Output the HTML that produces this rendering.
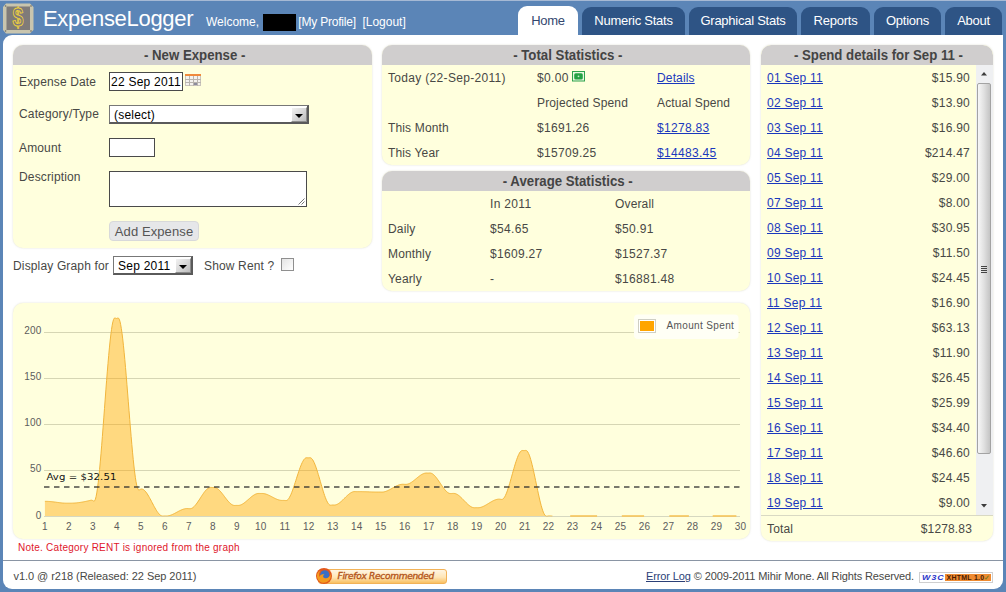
<!DOCTYPE html>
<html lang="en">
<head>
<meta charset="utf-8">
<title>ExpenseLogger</title>
<style>
*{box-sizing:border-box;margin:0;padding:0}
html,body{width:1006px;height:592px;overflow:hidden}
body{background:#5b85b7;font-family:"Liberation Sans",Arial,sans-serif;font-size:12px;color:#484845;position:relative}
a{color:#1a38bd;text-decoration:underline}
#logo{position:absolute;left:3px;top:2.5px;width:31px;height:31px}
#title{position:absolute;left:43px;top:5.7px;font-size:22px;color:#fff;line-height:26px;white-space:nowrap;letter-spacing:-0.3px}
.wl{position:absolute;left:206px;top:14.6px;color:#fff;font-size:12px;line-height:15px;white-space:nowrap}
#redact{position:absolute;left:263px;top:14px;width:33px;height:17px;background:#000}
.tab{position:absolute;top:7px;height:27.5px;background:#2e5485;color:#fff;font-size:13px;line-height:27px;text-align:center;border-radius:9px 9px 0 0;white-space:nowrap;letter-spacing:-0.25px}
.tab.on{background:#fff;color:#33476e;top:6px;height:31px;line-height:29px}
#main{position:absolute;left:3px;top:34.5px;width:1000px;height:554.2px;background:#fff;border-radius:9px 0 9px 9px}
.panel{position:absolute;background:#ffffdd;border-radius:10px;box-shadow:0 0 2px rgba(170,170,140,.4)}
.panel h2{height:20px;background:#d0cece;border-radius:10px 10px 0 0;font-size:14px;line-height:21.5px;text-align:center;color:#444;font-weight:bold;white-space:nowrap;padding-left:4px}
.panel h2 span{display:inline-block;transform:scaleX(.945);transform-origin:50% 50%}
.t{position:absolute;white-space:nowrap;line-height:14px;letter-spacing:.15px}
.r{text-align:right}
.dl{letter-spacing:.24px}
.ds{letter-spacing:.32px}
.box{position:absolute;background:#fff;border:1px solid #4a4a4a}
.sel{border-color:#777 #5a5a5a #5a5a5a #777;border-width:1px 2px 2px 1px}
.arrow{position:absolute;right:0;top:1px;bottom:0;width:16px;background:linear-gradient(135deg,#f2f2f2,#d9d9d9 50%,#bdbdbd);border:1px solid;border-color:#fff #8c8c8c #8c8c8c #fff}
.arrow:after{content:"";position:absolute;left:3px;top:5.5px;border:4px solid transparent;border-top:4px solid #000;border-bottom:0}
#footer{position:absolute;left:3px;top:560px;width:1000px;height:1px;background:#8a95a4}
.ft{font-size:11px;letter-spacing:-.05px}
</style>
</head>
<body>
<svg id="logo" viewBox="0 0 31 31"><path d="M3 0.5H27L30.500 4V27L27 30.500H3L0 27V4Z" fill="#c9c5ae"/><rect x="3.500" y="3.500" width="23.500" height="23.500" fill="#7f7b79"/><circle cx="2.600" cy="3" r="0.800" fill="#6b6860"/><circle cx="28" cy="3" r="0.800" fill="#6b6860"/><circle cx="2.600" cy="28" r="0.800" fill="#6b6860"/><circle cx="28" cy="28" r="0.800" fill="#6b6860"/><text x="15" y="23.3" font-family="Liberation Sans, sans-serif" font-weight="bold" font-size="25" fill="none" stroke="#f4d43a" stroke-width="0.9" text-anchor="middle" transform="translate(15 0) scale(0.78 1) translate(-15 0)">$</text></svg>
<div id="title">ExpenseLogger</div>
<div class="wl">Welcome,</div><div class="wl" style="left:298.3px;letter-spacing:-.2px">[My Profile]</div><div class="wl" style="left:362.4px">[Logout]</div>
<div id="redact"></div>

<div class="tab on" style="left:518px;width:60px">Home</div>
<div class="tab" style="left:582px;width:103px">Numeric Stats</div>
<div class="tab" style="left:689px;width:108px">Graphical Stats</div>
<div class="tab" style="left:801px;width:69px">Reports</div>
<div class="tab" style="left:874px;width:67px">Options</div>
<div class="tab" style="left:945px;width:57px">About</div>

<div id="main"></div>
<div style="position:absolute;left:0;top:0;width:1006px;height:1px;background:#a6b9d4"></div>

<!-- New Expense -->
<div class="panel" style="left:13px;top:45px;width:359px;height:203px"><h2><span>- New Expense -</span></h2></div>
<div class="t" style="left:19px;top:75px">Expense Date</div>
<div class="t" style="left:19px;top:107px">Category/Type</div>
<div class="t" style="left:19px;top:140.7px">Amount</div>
<div class="t" style="left:19px;top:170px">Description</div>
<div class="box" style="left:109px;top:72px;width:74px;height:19px"><span class="t dl" style="left:1px;top:2px;font-size:12px;color:#000">22 Sep 2011</span></div>
<svg style="position:absolute;left:185px;top:74px" width="16" height="12" viewBox="0 0 16 12"><rect x="0.5" y="0.5" width="15" height="11" fill="#f4f2ee" stroke="#c9c4bc"/><rect x="0" y="0" width="16" height="2" fill="#f08a3c"/><path d="M4.5 2V12M8.5 2V12M12.5 2V12M0 5.5H16M0 8.5H16" stroke="#b9b4ae" stroke-width="1" fill="none"/><rect x="9" y="9" width="3" height="2" fill="#8c8c9c"/></svg>
<div class="box sel" style="left:109px;top:105px;width:200px;height:19px"><span class="t" style="left:4px;top:2px;font-size:12px;color:#000;letter-spacing:.2px">(select)</span><span class="arrow"></span></div>
<div class="box" style="left:109px;top:138px;width:46px;height:19px"></div>
<div class="box" style="left:109px;top:171px;width:198px;height:36px"><svg style="position:absolute;right:1px;bottom:1px" width="8" height="8" viewBox="0 0 8 8"><path d="M7.5 1.5L1.5 7.5M7.5 4.5L4.5 7.5" stroke="#777" stroke-width="1"/></svg></div>
<div class="t" style="left:109px;top:221px;width:90px;height:20px;background:#e6e7e9;border:1px solid #d8d9da;border-radius:4px;font-size:13px;line-height:18px;padding-top:.7px;text-align:center;color:#555;letter-spacing:.1px">Add Expense</div>

<div class="t" style="left:13px;top:259px">Display Graph for</div>
<div class="box sel" style="left:113px;top:256px;width:80px;height:19px"><span class="t dl" style="left:4px;top:2px;font-size:12px;color:#000">Sep 2011</span><span class="arrow"></span></div>
<div class="t" style="left:204px;top:259px">Show Rent ?</div>
<div class="box" style="left:281px;top:258px;width:13px;height:13px;border-color:#8f8f8f;background:linear-gradient(135deg,#e4e4e4,#fff)"></div>

<!-- Total Statistics -->
<div class="panel" style="left:382px;top:45px;width:368px;height:120px"><h2><span>- Total Statistics -</span></h2></div>
<div class="t ds" style="left:388px;top:70.5px">Today (22-Sep-2011)</div>
<div class="t ds" style="left:537px;top:70.5px">$0.00</div>
<a class="t" href="#" style="left:657px;top:70.5px">Details</a>
<div class="t" style="left:537px;top:95.5px">Projected Spend</div>
<div class="t" style="left:657px;top:95.5px">Actual Spend</div>
<div class="t" style="left:388px;top:120.5px">This Month</div>
<div class="t ds" style="left:537px;top:120.5px">$1691.26</div>
<a class="t ds" href="#" style="left:657px;top:120.5px">$1278.83</a>
<div class="t" style="left:388px;top:145.5px">This Year</div>
<div class="t ds" style="left:537px;top:145.5px">$15709.25</div>
<a class="t ds" href="#" style="left:657px;top:145.5px">$14483.45</a>
<svg style="position:absolute;left:572px;top:71px" width="13" height="11" viewBox="0 0 13 11"><rect x="0.5" y="0.5" width="12" height="9.5" fill="#e9f7df" stroke="#2ea34c"/><rect x="2.2" y="2.2" width="8.6" height="6.2" rx="1.5" fill="#25a244"/><circle cx="6.5" cy="5.3" r="0.9" fill="#c9efc9"/></svg>
<!-- Average Statistics -->
<div class="panel" style="left:382px;top:171px;width:368px;height:120px"><h2><span>- Average Statistics -</span></h2></div>
<div class="t ds" style="left:490px;top:196.5px">In 2011</div>
<div class="t" style="left:615px;top:196.5px">Overall</div>
<div class="t" style="left:388px;top:221.5px">Daily</div>
<div class="t ds" style="left:490px;top:221.5px">$54.65</div>
<div class="t ds" style="left:615px;top:221.5px">$50.91</div>
<div class="t" style="left:388px;top:246.5px">Monthly</div>
<div class="t ds" style="left:490px;top:246.5px">$1609.27</div>
<div class="t ds" style="left:615px;top:246.5px">$1527.37</div>
<div class="t" style="left:388px;top:271.5px">Yearly</div>
<div class="t" style="left:490px;top:271.5px">-</div>
<div class="t ds" style="left:615px;top:271.5px">$16881.48</div>
<!-- Spend details -->
<div class="panel" style="left:761px;top:45px;width:231.5px;height:496px;overflow:hidden"><h2><span>- Spend details for Sep 11 -</span></h2>
<div style="position:absolute;left:215px;top:20px;width:17px;height:450px;background:#eff0f2"></div>
<div style="position:absolute;left:216px;top:38px;width:14px;height:371px;border:1px solid #a3a3a3;border-radius:2px;background:linear-gradient(90deg,#f7f7f7,#e0e0e0 50%,#c4c4c4)"></div>
<div style="position:absolute;left:0;top:470px;width:232px;height:1px;background:#d9d9c3"></div>
</div>
<svg style="position:absolute;left:976px;top:65px" width="17" height="451" viewBox="0 0 17 451"><path d="M5 10.6L8 6.9L11 10.6Z" fill="#3c3c3c"/><path d="M5 439L8 442.5L11 439Z" fill="#3c3c3c"/><path d="M5 201.5H11M5 203.5H11M5 205.5H11M5 207.5H11" stroke="#444" stroke-width="1"/></svg>
<a class="t dl" href="#" style="left:767px;top:70.5px">01 Sep 11</a><div class="t r dl" style="left:880px;width:90px;top:70.5px">$15.90</div>
<a class="t dl" href="#" style="left:767px;top:95.5px">02 Sep 11</a><div class="t r dl" style="left:880px;width:90px;top:95.5px">$13.90</div>
<a class="t dl" href="#" style="left:767px;top:120.5px">03 Sep 11</a><div class="t r dl" style="left:880px;width:90px;top:120.5px">$16.90</div>
<a class="t dl" href="#" style="left:767px;top:145.5px">04 Sep 11</a><div class="t r dl" style="left:880px;width:90px;top:145.5px">$214.47</div>
<a class="t dl" href="#" style="left:767px;top:170.5px">05 Sep 11</a><div class="t r dl" style="left:880px;width:90px;top:170.5px">$29.00</div>
<a class="t dl" href="#" style="left:767px;top:195.5px">07 Sep 11</a><div class="t r dl" style="left:880px;width:90px;top:195.5px">$8.00</div>
<a class="t dl" href="#" style="left:767px;top:220.5px">08 Sep 11</a><div class="t r dl" style="left:880px;width:90px;top:220.5px">$30.95</div>
<a class="t dl" href="#" style="left:767px;top:245.5px">09 Sep 11</a><div class="t r dl" style="left:880px;width:90px;top:245.5px">$11.50</div>
<a class="t dl" href="#" style="left:767px;top:270.5px">10 Sep 11</a><div class="t r dl" style="left:880px;width:90px;top:270.5px">$24.45</div>
<a class="t dl" href="#" style="left:767px;top:295.5px">11 Sep 11</a><div class="t r dl" style="left:880px;width:90px;top:295.5px">$16.90</div>
<a class="t dl" href="#" style="left:767px;top:320.5px">12 Sep 11</a><div class="t r dl" style="left:880px;width:90px;top:320.5px">$63.13</div>
<a class="t dl" href="#" style="left:767px;top:345.5px">13 Sep 11</a><div class="t r dl" style="left:880px;width:90px;top:345.5px">$11.90</div>
<a class="t dl" href="#" style="left:767px;top:370.5px">14 Sep 11</a><div class="t r dl" style="left:880px;width:90px;top:370.5px">$26.45</div>
<a class="t dl" href="#" style="left:767px;top:395.5px">15 Sep 11</a><div class="t r dl" style="left:880px;width:90px;top:395.5px">$25.99</div>
<a class="t dl" href="#" style="left:767px;top:420.5px">16 Sep 11</a><div class="t r dl" style="left:880px;width:90px;top:420.5px">$34.40</div>
<a class="t dl" href="#" style="left:767px;top:445.5px">17 Sep 11</a><div class="t r dl" style="left:880px;width:90px;top:445.5px">$46.60</div>
<a class="t dl" href="#" style="left:767px;top:470.5px">18 Sep 11</a><div class="t r dl" style="left:880px;width:90px;top:470.5px">$24.45</div>
<a class="t dl" href="#" style="left:767px;top:495.5px">19 Sep 11</a><div class="t r dl" style="left:880px;width:90px;top:495.5px">$9.00</div>
<div class="t" style="left:767px;top:521.5px">Total</div>
<div class="t r" style="left:880px;width:92px;top:521.5px">$1278.83</div>
<!-- Graph -->
<div class="panel" style="left:13px;top:302.8px;width:737px;height:236.4px"></div>
<svg id="chart" width="737" height="238" viewBox="13 302 737 238" style="position:absolute;left:13px;top:302px">
<path d="M44 332.5H740" stroke="#d6d6b4" stroke-width="1" fill="none"/>
<path d="M44 378.5H740" stroke="#d6d6b4" stroke-width="1" fill="none"/>
<path d="M44 424.5H740" stroke="#d6d6b4" stroke-width="1" fill="none"/>
<path d="M44 470.5H740" stroke="#d6d6b4" stroke-width="1" fill="none"/>
<path d="M44 516.5H740" stroke="#d6d8c0" stroke-width="1" fill="none"/>
<clipPath id="pc"><rect x="44" y="310" width="697" height="206.6"/></clipPath>
<g clip-path="url(#pc)"><path d="M44.91 501.35 L45.61 501.35 L46.31 501.35 L47.01 501.36 L47.71 501.38 L48.41 501.41 L49.11 501.45 L49.81 501.50 L50.51 501.56 L51.21 501.63 L51.92 501.70 L52.62 501.78 L53.32 501.86 L54.02 501.95 L54.72 502.04 L55.42 502.14 L56.12 502.23 L56.82 502.33 L57.52 502.42 L58.22 502.51 L58.93 502.61 L59.63 502.69 L60.33 502.78 L61.03 502.86 L61.73 502.93 L62.43 503.00 L63.13 503.05 L63.83 503.10 L64.53 503.15 L65.23 503.18 L65.94 503.20 L66.64 503.20 L67.34 503.20 L68.04 503.20 L68.74 503.20 L69.44 503.20 L70.14 503.20 L70.84 503.20 L71.54 503.19 L72.24 503.17 L72.95 503.14 L73.65 503.10 L74.35 503.06 L75.05 503.01 L75.75 502.95 L76.45 502.88 L77.15 502.81 L77.85 502.73 L78.55 502.64 L79.25 502.55 L79.96 502.45 L80.66 502.34 L81.36 502.23 L82.06 502.11 L82.76 501.99 L83.46 501.86 L84.16 501.73 L84.86 501.59 L85.56 501.45 L86.26 501.30 L86.97 501.15 L87.67 500.99 L88.37 500.83 L89.07 500.67 L89.77 500.51 L90.47 500.34 L91.17 500.22 L91.87 500.24 L92.57 500.49 L93.27 500.92 L93.98 501.14 L94.68 500.71 L95.38 499.24 L96.08 496.62 L96.78 492.95 L97.48 488.32 L98.18 482.81 L98.88 476.52 L99.58 469.53 L100.28 461.93 L100.99 453.81 L101.69 445.26 L102.39 436.36 L103.09 427.20 L103.79 417.88 L104.49 408.48 L105.19 399.10 L105.89 389.80 L106.59 380.70 L107.29 371.87 L108.00 363.41 L108.70 355.39 L109.40 347.92 L110.10 341.07 L110.80 334.95 L111.50 329.63 L112.20 325.20 L112.90 321.76 L113.60 319.39 L114.30 318.17 L115.01 317.95 L115.71 318.23 L116.41 318.47 L117.11 318.30 L117.81 318.02 L118.51 318.13 L119.21 319.13 L119.91 321.22 L120.61 324.32 L121.31 328.36 L122.02 333.24 L122.72 338.90 L123.42 345.24 L124.12 352.18 L124.82 359.64 L125.52 367.53 L126.22 375.78 L126.92 384.30 L127.62 393.00 L128.32 401.81 L129.03 410.63 L129.73 419.40 L130.43 428.02 L131.13 436.40 L131.83 444.48 L132.53 452.17 L133.23 459.37 L133.93 466.01 L134.63 472.01 L135.33 477.29 L136.04 481.75 L136.74 485.32 L137.44 487.92 L138.14 489.45 L138.84 489.97 L139.54 489.82 L140.24 489.40 L140.94 489.09 L141.64 489.00 L142.34 489.11 L143.05 489.40 L143.75 489.83 L144.45 490.41 L145.15 491.12 L145.85 491.95 L146.55 492.87 L147.25 493.90 L147.95 495.00 L148.65 496.18 L149.35 497.41 L150.06 498.68 L150.76 500.00 L151.46 501.33 L152.16 502.67 L152.86 504.02 L153.56 505.35 L154.26 506.65 L154.96 507.92 L155.66 509.14 L156.36 510.30 L157.07 511.39 L157.77 512.39 L158.47 513.30 L159.17 514.10 L159.87 514.78 L160.57 515.33 L161.27 515.74 L161.97 515.99 L162.67 516.09 L163.37 516.07 L164.08 516.02 L164.78 515.99 L165.48 515.99 L166.18 516.01 L166.88 516.00 L167.58 515.94 L168.28 515.84 L168.98 515.70 L169.68 515.51 L170.38 515.29 L171.09 515.04 L171.79 514.76 L172.49 514.45 L173.19 514.13 L173.89 513.78 L174.59 513.43 L175.29 513.06 L175.99 512.68 L176.69 512.30 L177.39 511.92 L178.10 511.54 L178.80 511.17 L179.50 510.81 L180.20 510.47 L180.90 510.14 L181.60 509.84 L182.30 509.56 L183.00 509.30 L183.70 509.08 L184.40 508.90 L185.11 508.75 L185.81 508.65 L186.51 508.60 L187.21 508.58 L187.91 508.60 L188.61 508.65 L189.31 508.70 L190.01 508.72 L190.71 508.65 L191.41 508.45 L192.12 508.12 L192.82 507.68 L193.52 507.12 L194.22 506.46 L194.92 505.72 L195.62 504.89 L196.32 504.00 L197.02 503.05 L197.72 502.05 L198.42 501.01 L199.13 499.94 L199.83 498.86 L200.53 497.77 L201.23 496.68 L201.93 495.61 L202.63 494.56 L203.33 493.54 L204.03 492.56 L204.73 491.64 L205.43 490.79 L206.14 490.01 L206.84 489.31 L207.54 488.71 L208.24 488.21 L208.94 487.83 L209.64 487.57 L210.34 487.45 L211.04 487.43 L211.74 487.47 L212.44 487.50 L213.15 487.47 L213.85 487.45 L214.55 487.47 L215.25 487.59 L215.95 487.83 L216.65 488.17 L217.35 488.61 L218.05 489.13 L218.75 489.74 L219.45 490.42 L220.16 491.16 L220.86 491.95 L221.56 492.79 L222.26 493.66 L222.96 494.57 L223.66 495.48 L224.36 496.41 L225.06 497.34 L225.76 498.26 L226.46 499.16 L227.17 500.04 L227.87 500.88 L228.57 501.68 L229.27 502.42 L229.97 503.11 L230.67 503.72 L231.37 504.26 L232.07 504.71 L232.77 505.06 L233.47 505.30 L234.18 505.44 L234.88 505.47 L235.58 505.44 L236.28 505.41 L236.98 505.41 L237.68 505.43 L238.38 505.43 L239.08 505.37 L239.78 505.23 L240.48 505.02 L241.19 504.75 L241.89 504.41 L242.59 504.02 L243.29 503.57 L243.99 503.09 L244.69 502.57 L245.39 502.02 L246.09 501.44 L246.79 500.84 L247.49 500.23 L248.20 499.62 L248.90 499.00 L249.60 498.38 L250.30 497.78 L251.00 497.19 L251.70 496.62 L252.40 496.08 L253.10 495.58 L253.80 495.11 L254.50 494.69 L255.20 494.32 L255.91 494.01 L256.61 493.76 L257.31 493.58 L258.01 493.48 L258.71 493.44 L259.41 493.45 L260.11 493.48 L260.81 493.48 L261.51 493.47 L262.21 493.47 L262.92 493.49 L263.62 493.57 L264.32 493.68 L265.02 493.84 L265.72 494.04 L266.42 494.27 L267.12 494.53 L267.82 494.82 L268.52 495.13 L269.22 495.46 L269.93 495.80 L270.63 496.16 L271.33 496.52 L272.03 496.89 L272.73 497.26 L273.43 497.62 L274.13 497.98 L274.83 498.33 L275.53 498.67 L276.23 498.98 L276.94 499.28 L277.64 499.55 L278.34 499.79 L279.04 500.00 L279.74 500.17 L280.44 500.30 L281.14 500.39 L281.84 500.43 L282.54 500.43 L283.24 500.41 L283.95 500.41 L284.65 500.47 L285.35 500.56 L286.05 500.58 L286.75 500.43 L287.45 500.00 L288.15 499.32 L288.85 498.39 L289.55 497.25 L290.25 495.90 L290.96 494.38 L291.66 492.70 L292.36 490.88 L293.06 488.94 L293.76 486.91 L294.46 484.81 L295.16 482.65 L295.86 480.46 L296.56 478.26 L297.26 476.06 L297.97 473.90 L298.67 471.78 L299.37 469.73 L300.07 467.78 L300.77 465.94 L301.47 464.23 L302.17 462.68 L302.87 461.30 L303.57 460.12 L304.27 459.15 L304.98 458.42 L305.68 457.95 L306.38 457.75 L307.08 457.76 L307.78 457.83 L308.48 457.85 L309.18 457.77 L309.88 457.72 L310.58 457.81 L311.28 458.19 L311.99 458.86 L312.69 459.80 L313.39 461.00 L314.09 462.42 L314.79 464.05 L315.49 465.86 L316.19 467.83 L316.89 469.94 L317.59 472.16 L318.29 474.46 L319.00 476.84 L319.70 479.26 L320.40 481.70 L321.10 484.13 L321.80 486.55 L322.50 488.91 L323.20 491.20 L323.90 493.40 L324.60 495.48 L325.30 497.42 L326.01 499.20 L326.71 500.79 L327.41 502.17 L328.11 503.32 L328.81 504.21 L329.51 504.83 L330.21 505.15 L330.91 505.21 L331.61 505.13 L332.31 505.04 L333.02 505.02 L333.72 505.04 L334.42 505.05 L335.12 504.99 L335.82 504.85 L336.52 504.61 L337.22 504.31 L337.92 503.93 L338.62 503.49 L339.32 503.00 L340.03 502.45 L340.73 501.87 L341.43 501.24 L342.13 500.59 L342.83 499.92 L343.53 499.23 L344.23 498.53 L344.93 497.83 L345.63 497.14 L346.33 496.46 L347.04 495.79 L347.74 495.15 L348.44 494.54 L349.14 493.97 L349.84 493.45 L350.54 492.97 L351.24 492.56 L351.94 492.21 L352.64 491.93 L353.34 491.73 L354.05 491.62 L354.75 491.59 L355.45 491.60 L356.15 491.63 L356.85 491.65 L357.55 491.65 L358.25 491.65 L358.95 491.64 L359.65 491.63 L360.35 491.63 L361.06 491.64 L361.76 491.65 L362.46 491.66 L363.16 491.67 L363.86 491.69 L364.56 491.71 L365.26 491.73 L365.96 491.75 L366.66 491.77 L367.36 491.80 L368.07 491.83 L368.77 491.85 L369.47 491.88 L370.17 491.90 L370.87 491.93 L371.57 491.95 L372.27 491.97 L372.97 491.99 L373.67 492.01 L374.37 492.03 L375.08 492.04 L375.78 492.05 L376.48 492.06 L377.18 492.06 L377.88 492.06 L378.58 492.06 L379.28 492.06 L379.98 492.06 L380.68 492.07 L381.38 492.09 L382.09 492.09 L382.79 492.05 L383.49 491.97 L384.19 491.84 L384.89 491.67 L385.59 491.46 L386.29 491.21 L386.99 490.94 L387.69 490.63 L388.39 490.30 L389.10 489.95 L389.80 489.59 L390.50 489.21 L391.20 488.82 L391.90 488.42 L392.60 488.03 L393.30 487.63 L394.00 487.24 L394.70 486.86 L395.40 486.49 L396.11 486.14 L396.81 485.80 L397.51 485.49 L398.21 485.21 L398.91 484.96 L399.61 484.74 L400.31 484.56 L401.01 484.42 L401.71 484.33 L402.41 484.28 L403.12 484.28 L403.82 484.30 L404.52 484.33 L405.22 484.36 L405.92 484.37 L406.62 484.32 L407.32 484.20 L408.02 484.02 L408.72 483.77 L409.42 483.47 L410.13 483.11 L410.83 482.71 L411.53 482.26 L412.23 481.78 L412.93 481.27 L413.63 480.73 L414.33 480.18 L415.03 479.61 L415.73 479.03 L416.43 478.45 L417.14 477.87 L417.84 477.30 L418.54 476.74 L419.24 476.20 L419.94 475.69 L420.64 475.20 L421.34 474.76 L422.04 474.35 L422.74 473.99 L423.44 473.68 L424.15 473.42 L424.85 473.23 L425.55 473.11 L426.25 473.06 L426.95 473.06 L427.65 473.08 L428.35 473.08 L429.05 473.04 L429.75 473.01 L430.45 473.06 L431.16 473.21 L431.86 473.50 L432.56 473.90 L433.26 474.41 L433.96 475.02 L434.66 475.72 L435.36 476.49 L436.06 477.33 L436.76 478.24 L437.46 479.19 L438.17 480.18 L438.87 481.20 L439.57 482.24 L440.27 483.28 L440.97 484.33 L441.67 485.37 L442.37 486.39 L443.07 487.38 L443.77 488.34 L444.47 489.24 L445.18 490.08 L445.88 490.86 L446.58 491.56 L447.28 492.17 L447.98 492.68 L448.68 493.08 L449.38 493.37 L450.08 493.53 L450.78 493.57 L451.48 493.55 L452.19 493.48 L452.89 493.43 L453.59 493.41 L454.29 493.44 L454.99 493.56 L455.69 493.76 L456.39 494.04 L457.09 494.40 L457.79 494.82 L458.49 495.31 L459.20 495.85 L459.90 496.44 L460.60 497.07 L461.30 497.73 L462.00 498.42 L462.70 499.13 L463.40 499.85 L464.10 500.58 L464.80 501.31 L465.50 502.03 L466.21 502.74 L466.91 503.43 L467.61 504.10 L468.31 504.72 L469.01 505.31 L469.71 505.85 L470.41 506.34 L471.11 506.77 L471.81 507.12 L472.51 507.41 L473.22 507.61 L473.92 507.72 L474.62 507.76 L475.32 507.74 L476.02 507.71 L476.72 507.71 L477.42 507.72 L478.12 507.73 L478.82 507.69 L479.52 507.61 L480.23 507.47 L480.93 507.29 L481.63 507.07 L482.33 506.81 L483.03 506.51 L483.73 506.19 L484.43 505.84 L485.13 505.46 L485.83 505.07 L486.53 504.66 L487.24 504.24 L487.94 503.81 L488.64 503.38 L489.34 502.95 L490.04 502.53 L490.74 502.11 L491.44 501.71 L492.14 501.32 L492.84 500.95 L493.54 500.60 L494.25 500.28 L494.95 500.00 L495.65 499.75 L496.35 499.53 L497.05 499.36 L497.75 499.24 L498.45 499.17 L499.15 499.15 L499.85 499.20 L500.55 499.30 L501.26 499.41 L501.96 499.41 L502.66 499.19 L503.36 498.67 L504.06 497.85 L504.76 496.76 L505.46 495.42 L506.16 493.86 L506.86 492.09 L507.56 490.15 L508.27 488.06 L508.97 485.83 L509.67 483.50 L510.37 481.09 L511.07 478.62 L511.77 476.12 L512.47 473.60 L513.17 471.10 L513.87 468.63 L514.57 466.22 L515.28 463.90 L515.98 461.69 L516.68 459.60 L517.38 457.67 L518.08 455.92 L518.78 454.38 L519.48 453.05 L520.18 451.98 L520.88 451.18 L521.58 450.68 L522.29 450.49 L522.99 450.51 L523.69 450.59 L524.39 450.59 L525.09 450.47 L525.79 450.41 L526.49 450.58 L527.19 451.14 L527.89 452.11 L528.59 453.45 L529.30 455.14 L530.00 457.14 L530.70 459.42 L531.40 461.95 L532.10 464.69 L532.80 467.62 L533.50 470.70 L534.20 473.90 L534.90 477.20 L535.60 480.55 L536.30 483.92 L537.01 487.29 L537.71 490.63 L538.41 493.89 L539.11 497.05 L539.81 500.09 L540.51 502.95 L541.21 505.62 L541.91 508.07 L542.61 510.25 L543.31 512.14 L544.02 513.71 L544.72 514.93 L545.42 515.76 L546.12 516.17 L546.82 516.25 L547.52 516.13 L548.22 515.99 L548.92 515.93 L549.62 515.94 L550.32 515.98 L551.03 516.04 L551.73 516.08 L552.43 516.12 L552.43 516.00 L44.91 516.00 Z" fill="#ffa500" fill-opacity="0.42" stroke="none"/>
<path d="M44.91 501.35 L45.61 501.35 L46.31 501.35 L47.01 501.36 L47.71 501.38 L48.41 501.41 L49.11 501.45 L49.81 501.50 L50.51 501.56 L51.21 501.63 L51.92 501.70 L52.62 501.78 L53.32 501.86 L54.02 501.95 L54.72 502.04 L55.42 502.14 L56.12 502.23 L56.82 502.33 L57.52 502.42 L58.22 502.51 L58.93 502.61 L59.63 502.69 L60.33 502.78 L61.03 502.86 L61.73 502.93 L62.43 503.00 L63.13 503.05 L63.83 503.10 L64.53 503.15 L65.23 503.18 L65.94 503.20 L66.64 503.20 L67.34 503.20 L68.04 503.20 L68.74 503.20 L69.44 503.20 L70.14 503.20 L70.84 503.20 L71.54 503.19 L72.24 503.17 L72.95 503.14 L73.65 503.10 L74.35 503.06 L75.05 503.01 L75.75 502.95 L76.45 502.88 L77.15 502.81 L77.85 502.73 L78.55 502.64 L79.25 502.55 L79.96 502.45 L80.66 502.34 L81.36 502.23 L82.06 502.11 L82.76 501.99 L83.46 501.86 L84.16 501.73 L84.86 501.59 L85.56 501.45 L86.26 501.30 L86.97 501.15 L87.67 500.99 L88.37 500.83 L89.07 500.67 L89.77 500.51 L90.47 500.34 L91.17 500.22 L91.87 500.24 L92.57 500.49 L93.27 500.92 L93.98 501.14 L94.68 500.71 L95.38 499.24 L96.08 496.62 L96.78 492.95 L97.48 488.32 L98.18 482.81 L98.88 476.52 L99.58 469.53 L100.28 461.93 L100.99 453.81 L101.69 445.26 L102.39 436.36 L103.09 427.20 L103.79 417.88 L104.49 408.48 L105.19 399.10 L105.89 389.80 L106.59 380.70 L107.29 371.87 L108.00 363.41 L108.70 355.39 L109.40 347.92 L110.10 341.07 L110.80 334.95 L111.50 329.63 L112.20 325.20 L112.90 321.76 L113.60 319.39 L114.30 318.17 L115.01 317.95 L115.71 318.23 L116.41 318.47 L117.11 318.30 L117.81 318.02 L118.51 318.13 L119.21 319.13 L119.91 321.22 L120.61 324.32 L121.31 328.36 L122.02 333.24 L122.72 338.90 L123.42 345.24 L124.12 352.18 L124.82 359.64 L125.52 367.53 L126.22 375.78 L126.92 384.30 L127.62 393.00 L128.32 401.81 L129.03 410.63 L129.73 419.40 L130.43 428.02 L131.13 436.40 L131.83 444.48 L132.53 452.17 L133.23 459.37 L133.93 466.01 L134.63 472.01 L135.33 477.29 L136.04 481.75 L136.74 485.32 L137.44 487.92 L138.14 489.45 L138.84 489.97 L139.54 489.82 L140.24 489.40 L140.94 489.09 L141.64 489.00 L142.34 489.11 L143.05 489.40 L143.75 489.83 L144.45 490.41 L145.15 491.12 L145.85 491.95 L146.55 492.87 L147.25 493.90 L147.95 495.00 L148.65 496.18 L149.35 497.41 L150.06 498.68 L150.76 500.00 L151.46 501.33 L152.16 502.67 L152.86 504.02 L153.56 505.35 L154.26 506.65 L154.96 507.92 L155.66 509.14 L156.36 510.30 L157.07 511.39 L157.77 512.39 L158.47 513.30 L159.17 514.10 L159.87 514.78 L160.57 515.33 L161.27 515.74 L161.97 515.99 L162.67 516.09 L163.37 516.07 L164.08 516.02 L164.78 515.99 L165.48 515.99 L166.18 516.01 L166.88 516.00 L167.58 515.94 L168.28 515.84 L168.98 515.70 L169.68 515.51 L170.38 515.29 L171.09 515.04 L171.79 514.76 L172.49 514.45 L173.19 514.13 L173.89 513.78 L174.59 513.43 L175.29 513.06 L175.99 512.68 L176.69 512.30 L177.39 511.92 L178.10 511.54 L178.80 511.17 L179.50 510.81 L180.20 510.47 L180.90 510.14 L181.60 509.84 L182.30 509.56 L183.00 509.30 L183.70 509.08 L184.40 508.90 L185.11 508.75 L185.81 508.65 L186.51 508.60 L187.21 508.58 L187.91 508.60 L188.61 508.65 L189.31 508.70 L190.01 508.72 L190.71 508.65 L191.41 508.45 L192.12 508.12 L192.82 507.68 L193.52 507.12 L194.22 506.46 L194.92 505.72 L195.62 504.89 L196.32 504.00 L197.02 503.05 L197.72 502.05 L198.42 501.01 L199.13 499.94 L199.83 498.86 L200.53 497.77 L201.23 496.68 L201.93 495.61 L202.63 494.56 L203.33 493.54 L204.03 492.56 L204.73 491.64 L205.43 490.79 L206.14 490.01 L206.84 489.31 L207.54 488.71 L208.24 488.21 L208.94 487.83 L209.64 487.57 L210.34 487.45 L211.04 487.43 L211.74 487.47 L212.44 487.50 L213.15 487.47 L213.85 487.45 L214.55 487.47 L215.25 487.59 L215.95 487.83 L216.65 488.17 L217.35 488.61 L218.05 489.13 L218.75 489.74 L219.45 490.42 L220.16 491.16 L220.86 491.95 L221.56 492.79 L222.26 493.66 L222.96 494.57 L223.66 495.48 L224.36 496.41 L225.06 497.34 L225.76 498.26 L226.46 499.16 L227.17 500.04 L227.87 500.88 L228.57 501.68 L229.27 502.42 L229.97 503.11 L230.67 503.72 L231.37 504.26 L232.07 504.71 L232.77 505.06 L233.47 505.30 L234.18 505.44 L234.88 505.47 L235.58 505.44 L236.28 505.41 L236.98 505.41 L237.68 505.43 L238.38 505.43 L239.08 505.37 L239.78 505.23 L240.48 505.02 L241.19 504.75 L241.89 504.41 L242.59 504.02 L243.29 503.57 L243.99 503.09 L244.69 502.57 L245.39 502.02 L246.09 501.44 L246.79 500.84 L247.49 500.23 L248.20 499.62 L248.90 499.00 L249.60 498.38 L250.30 497.78 L251.00 497.19 L251.70 496.62 L252.40 496.08 L253.10 495.58 L253.80 495.11 L254.50 494.69 L255.20 494.32 L255.91 494.01 L256.61 493.76 L257.31 493.58 L258.01 493.48 L258.71 493.44 L259.41 493.45 L260.11 493.48 L260.81 493.48 L261.51 493.47 L262.21 493.47 L262.92 493.49 L263.62 493.57 L264.32 493.68 L265.02 493.84 L265.72 494.04 L266.42 494.27 L267.12 494.53 L267.82 494.82 L268.52 495.13 L269.22 495.46 L269.93 495.80 L270.63 496.16 L271.33 496.52 L272.03 496.89 L272.73 497.26 L273.43 497.62 L274.13 497.98 L274.83 498.33 L275.53 498.67 L276.23 498.98 L276.94 499.28 L277.64 499.55 L278.34 499.79 L279.04 500.00 L279.74 500.17 L280.44 500.30 L281.14 500.39 L281.84 500.43 L282.54 500.43 L283.24 500.41 L283.95 500.41 L284.65 500.47 L285.35 500.56 L286.05 500.58 L286.75 500.43 L287.45 500.00 L288.15 499.32 L288.85 498.39 L289.55 497.25 L290.25 495.90 L290.96 494.38 L291.66 492.70 L292.36 490.88 L293.06 488.94 L293.76 486.91 L294.46 484.81 L295.16 482.65 L295.86 480.46 L296.56 478.26 L297.26 476.06 L297.97 473.90 L298.67 471.78 L299.37 469.73 L300.07 467.78 L300.77 465.94 L301.47 464.23 L302.17 462.68 L302.87 461.30 L303.57 460.12 L304.27 459.15 L304.98 458.42 L305.68 457.95 L306.38 457.75 L307.08 457.76 L307.78 457.83 L308.48 457.85 L309.18 457.77 L309.88 457.72 L310.58 457.81 L311.28 458.19 L311.99 458.86 L312.69 459.80 L313.39 461.00 L314.09 462.42 L314.79 464.05 L315.49 465.86 L316.19 467.83 L316.89 469.94 L317.59 472.16 L318.29 474.46 L319.00 476.84 L319.70 479.26 L320.40 481.70 L321.10 484.13 L321.80 486.55 L322.50 488.91 L323.20 491.20 L323.90 493.40 L324.60 495.48 L325.30 497.42 L326.01 499.20 L326.71 500.79 L327.41 502.17 L328.11 503.32 L328.81 504.21 L329.51 504.83 L330.21 505.15 L330.91 505.21 L331.61 505.13 L332.31 505.04 L333.02 505.02 L333.72 505.04 L334.42 505.05 L335.12 504.99 L335.82 504.85 L336.52 504.61 L337.22 504.31 L337.92 503.93 L338.62 503.49 L339.32 503.00 L340.03 502.45 L340.73 501.87 L341.43 501.24 L342.13 500.59 L342.83 499.92 L343.53 499.23 L344.23 498.53 L344.93 497.83 L345.63 497.14 L346.33 496.46 L347.04 495.79 L347.74 495.15 L348.44 494.54 L349.14 493.97 L349.84 493.45 L350.54 492.97 L351.24 492.56 L351.94 492.21 L352.64 491.93 L353.34 491.73 L354.05 491.62 L354.75 491.59 L355.45 491.60 L356.15 491.63 L356.85 491.65 L357.55 491.65 L358.25 491.65 L358.95 491.64 L359.65 491.63 L360.35 491.63 L361.06 491.64 L361.76 491.65 L362.46 491.66 L363.16 491.67 L363.86 491.69 L364.56 491.71 L365.26 491.73 L365.96 491.75 L366.66 491.77 L367.36 491.80 L368.07 491.83 L368.77 491.85 L369.47 491.88 L370.17 491.90 L370.87 491.93 L371.57 491.95 L372.27 491.97 L372.97 491.99 L373.67 492.01 L374.37 492.03 L375.08 492.04 L375.78 492.05 L376.48 492.06 L377.18 492.06 L377.88 492.06 L378.58 492.06 L379.28 492.06 L379.98 492.06 L380.68 492.07 L381.38 492.09 L382.09 492.09 L382.79 492.05 L383.49 491.97 L384.19 491.84 L384.89 491.67 L385.59 491.46 L386.29 491.21 L386.99 490.94 L387.69 490.63 L388.39 490.30 L389.10 489.95 L389.80 489.59 L390.50 489.21 L391.20 488.82 L391.90 488.42 L392.60 488.03 L393.30 487.63 L394.00 487.24 L394.70 486.86 L395.40 486.49 L396.11 486.14 L396.81 485.80 L397.51 485.49 L398.21 485.21 L398.91 484.96 L399.61 484.74 L400.31 484.56 L401.01 484.42 L401.71 484.33 L402.41 484.28 L403.12 484.28 L403.82 484.30 L404.52 484.33 L405.22 484.36 L405.92 484.37 L406.62 484.32 L407.32 484.20 L408.02 484.02 L408.72 483.77 L409.42 483.47 L410.13 483.11 L410.83 482.71 L411.53 482.26 L412.23 481.78 L412.93 481.27 L413.63 480.73 L414.33 480.18 L415.03 479.61 L415.73 479.03 L416.43 478.45 L417.14 477.87 L417.84 477.30 L418.54 476.74 L419.24 476.20 L419.94 475.69 L420.64 475.20 L421.34 474.76 L422.04 474.35 L422.74 473.99 L423.44 473.68 L424.15 473.42 L424.85 473.23 L425.55 473.11 L426.25 473.06 L426.95 473.06 L427.65 473.08 L428.35 473.08 L429.05 473.04 L429.75 473.01 L430.45 473.06 L431.16 473.21 L431.86 473.50 L432.56 473.90 L433.26 474.41 L433.96 475.02 L434.66 475.72 L435.36 476.49 L436.06 477.33 L436.76 478.24 L437.46 479.19 L438.17 480.18 L438.87 481.20 L439.57 482.24 L440.27 483.28 L440.97 484.33 L441.67 485.37 L442.37 486.39 L443.07 487.38 L443.77 488.34 L444.47 489.24 L445.18 490.08 L445.88 490.86 L446.58 491.56 L447.28 492.17 L447.98 492.68 L448.68 493.08 L449.38 493.37 L450.08 493.53 L450.78 493.57 L451.48 493.55 L452.19 493.48 L452.89 493.43 L453.59 493.41 L454.29 493.44 L454.99 493.56 L455.69 493.76 L456.39 494.04 L457.09 494.40 L457.79 494.82 L458.49 495.31 L459.20 495.85 L459.90 496.44 L460.60 497.07 L461.30 497.73 L462.00 498.42 L462.70 499.13 L463.40 499.85 L464.10 500.58 L464.80 501.31 L465.50 502.03 L466.21 502.74 L466.91 503.43 L467.61 504.10 L468.31 504.72 L469.01 505.31 L469.71 505.85 L470.41 506.34 L471.11 506.77 L471.81 507.12 L472.51 507.41 L473.22 507.61 L473.92 507.72 L474.62 507.76 L475.32 507.74 L476.02 507.71 L476.72 507.71 L477.42 507.72 L478.12 507.73 L478.82 507.69 L479.52 507.61 L480.23 507.47 L480.93 507.29 L481.63 507.07 L482.33 506.81 L483.03 506.51 L483.73 506.19 L484.43 505.84 L485.13 505.46 L485.83 505.07 L486.53 504.66 L487.24 504.24 L487.94 503.81 L488.64 503.38 L489.34 502.95 L490.04 502.53 L490.74 502.11 L491.44 501.71 L492.14 501.32 L492.84 500.95 L493.54 500.60 L494.25 500.28 L494.95 500.00 L495.65 499.75 L496.35 499.53 L497.05 499.36 L497.75 499.24 L498.45 499.17 L499.15 499.15 L499.85 499.20 L500.55 499.30 L501.26 499.41 L501.96 499.41 L502.66 499.19 L503.36 498.67 L504.06 497.85 L504.76 496.76 L505.46 495.42 L506.16 493.86 L506.86 492.09 L507.56 490.15 L508.27 488.06 L508.97 485.83 L509.67 483.50 L510.37 481.09 L511.07 478.62 L511.77 476.12 L512.47 473.60 L513.17 471.10 L513.87 468.63 L514.57 466.22 L515.28 463.90 L515.98 461.69 L516.68 459.60 L517.38 457.67 L518.08 455.92 L518.78 454.38 L519.48 453.05 L520.18 451.98 L520.88 451.18 L521.58 450.68 L522.29 450.49 L522.99 450.51 L523.69 450.59 L524.39 450.59 L525.09 450.47 L525.79 450.41 L526.49 450.58 L527.19 451.14 L527.89 452.11 L528.59 453.45 L529.30 455.14 L530.00 457.14 L530.70 459.42 L531.40 461.95 L532.10 464.69 L532.80 467.62 L533.50 470.70 L534.20 473.90 L534.90 477.20 L535.60 480.55 L536.30 483.92 L537.01 487.29 L537.71 490.63 L538.41 493.89 L539.11 497.05 L539.81 500.09 L540.51 502.95 L541.21 505.62 L541.91 508.07 L542.61 510.25 L543.31 512.14 L544.02 513.71 L544.72 514.93 L545.42 515.76 L546.12 516.17 L546.82 516.25 L547.52 516.13 L548.22 515.99 L548.92 515.93 L549.62 515.94 L550.32 515.98 L551.03 516.04 L551.73 516.08 L552.43 516.12" fill="none" stroke="#f1b53c" stroke-width="1" stroke-linejoin="round"/></g>
<path d="M570.2 516H597.1" stroke="#f6c55a" stroke-width="1.6" fill="none"/>
<path d="M621.8 516H644.1" stroke="#f6c55a" stroke-width="1.6" fill="none"/>
<path d="M669.3 516H688.9" stroke="#f6c55a" stroke-width="1.6" fill="none"/>
<path d="M712.7 516H736.4" stroke="#f6c55a" stroke-width="1.6" fill="none"/>
<path d="M44 486.9H740" stroke="#2c2c2c" stroke-opacity="0.64" stroke-width="2" stroke-dasharray="5.5 4.5" fill="none"/>
<text x="0" y="0" transform="translate(46.4 480) scale(1.1 1)" font-family='DejaVu Sans,Liberation Sans,sans-serif' font-size="9.2" letter-spacing="0.08" fill="#111">Avg = $32.51</text>
<text x="41.5" y="333.6" text-anchor="end" font-family='Liberation Sans,Arial,sans-serif' font-size="10" letter-spacing="0.2" fill="#5c5c5c">200</text>
<text x="41.5" y="379.9" text-anchor="end" font-family='Liberation Sans,Arial,sans-serif' font-size="10" letter-spacing="0.2" fill="#5c5c5c">150</text>
<text x="41.5" y="426.1" text-anchor="end" font-family='Liberation Sans,Arial,sans-serif' font-size="10" letter-spacing="0.2" fill="#5c5c5c">100</text>
<text x="41.5" y="472.4" text-anchor="end" font-family='Liberation Sans,Arial,sans-serif' font-size="10" letter-spacing="0.2" fill="#5c5c5c">50</text>
<text x="41.5" y="518.6" text-anchor="end" font-family='Liberation Sans,Arial,sans-serif' font-size="10" letter-spacing="0.2" fill="#5c5c5c">0</text>
<text x="45.0" y="529.6" text-anchor="middle" font-family='Liberation Sans,Arial,sans-serif' font-size="10" letter-spacing="0.2" fill="#5c5c5c">1</text>
<text x="69.0" y="529.6" text-anchor="middle" font-family='Liberation Sans,Arial,sans-serif' font-size="10" letter-spacing="0.2" fill="#5c5c5c">2</text>
<text x="93.0" y="529.6" text-anchor="middle" font-family='Liberation Sans,Arial,sans-serif' font-size="10" letter-spacing="0.2" fill="#5c5c5c">3</text>
<text x="116.9" y="529.6" text-anchor="middle" font-family='Liberation Sans,Arial,sans-serif' font-size="10" letter-spacing="0.2" fill="#5c5c5c">4</text>
<text x="140.9" y="529.6" text-anchor="middle" font-family='Liberation Sans,Arial,sans-serif' font-size="10" letter-spacing="0.2" fill="#5c5c5c">5</text>
<text x="164.9" y="529.6" text-anchor="middle" font-family='Liberation Sans,Arial,sans-serif' font-size="10" letter-spacing="0.2" fill="#5c5c5c">6</text>
<text x="188.9" y="529.6" text-anchor="middle" font-family='Liberation Sans,Arial,sans-serif' font-size="10" letter-spacing="0.2" fill="#5c5c5c">7</text>
<text x="212.9" y="529.6" text-anchor="middle" font-family='Liberation Sans,Arial,sans-serif' font-size="10" letter-spacing="0.2" fill="#5c5c5c">8</text>
<text x="236.9" y="529.6" text-anchor="middle" font-family='Liberation Sans,Arial,sans-serif' font-size="10" letter-spacing="0.2" fill="#5c5c5c">9</text>
<text x="260.8" y="529.6" text-anchor="middle" font-family='Liberation Sans,Arial,sans-serif' font-size="10" letter-spacing="0.2" fill="#5c5c5c">10</text>
<text x="284.8" y="529.6" text-anchor="middle" font-family='Liberation Sans,Arial,sans-serif' font-size="10" letter-spacing="0.2" fill="#5c5c5c">11</text>
<text x="308.8" y="529.6" text-anchor="middle" font-family='Liberation Sans,Arial,sans-serif' font-size="10" letter-spacing="0.2" fill="#5c5c5c">12</text>
<text x="332.8" y="529.6" text-anchor="middle" font-family='Liberation Sans,Arial,sans-serif' font-size="10" letter-spacing="0.2" fill="#5c5c5c">13</text>
<text x="356.8" y="529.6" text-anchor="middle" font-family='Liberation Sans,Arial,sans-serif' font-size="10" letter-spacing="0.2" fill="#5c5c5c">14</text>
<text x="380.8" y="529.6" text-anchor="middle" font-family='Liberation Sans,Arial,sans-serif' font-size="10" letter-spacing="0.2" fill="#5c5c5c">15</text>
<text x="404.7" y="529.6" text-anchor="middle" font-family='Liberation Sans,Arial,sans-serif' font-size="10" letter-spacing="0.2" fill="#5c5c5c">16</text>
<text x="428.7" y="529.6" text-anchor="middle" font-family='Liberation Sans,Arial,sans-serif' font-size="10" letter-spacing="0.2" fill="#5c5c5c">17</text>
<text x="452.7" y="529.6" text-anchor="middle" font-family='Liberation Sans,Arial,sans-serif' font-size="10" letter-spacing="0.2" fill="#5c5c5c">18</text>
<text x="476.7" y="529.6" text-anchor="middle" font-family='Liberation Sans,Arial,sans-serif' font-size="10" letter-spacing="0.2" fill="#5c5c5c">19</text>
<text x="500.7" y="529.6" text-anchor="middle" font-family='Liberation Sans,Arial,sans-serif' font-size="10" letter-spacing="0.2" fill="#5c5c5c">20</text>
<text x="524.7" y="529.6" text-anchor="middle" font-family='Liberation Sans,Arial,sans-serif' font-size="10" letter-spacing="0.2" fill="#5c5c5c">21</text>
<text x="548.6" y="529.6" text-anchor="middle" font-family='Liberation Sans,Arial,sans-serif' font-size="10" letter-spacing="0.2" fill="#5c5c5c">22</text>
<text x="572.6" y="529.6" text-anchor="middle" font-family='Liberation Sans,Arial,sans-serif' font-size="10" letter-spacing="0.2" fill="#5c5c5c">23</text>
<text x="596.6" y="529.6" text-anchor="middle" font-family='Liberation Sans,Arial,sans-serif' font-size="10" letter-spacing="0.2" fill="#5c5c5c">24</text>
<text x="620.6" y="529.6" text-anchor="middle" font-family='Liberation Sans,Arial,sans-serif' font-size="10" letter-spacing="0.2" fill="#5c5c5c">25</text>
<text x="644.6" y="529.6" text-anchor="middle" font-family='Liberation Sans,Arial,sans-serif' font-size="10" letter-spacing="0.2" fill="#5c5c5c">26</text>
<text x="668.6" y="529.6" text-anchor="middle" font-family='Liberation Sans,Arial,sans-serif' font-size="10" letter-spacing="0.2" fill="#5c5c5c">27</text>
<text x="692.5" y="529.6" text-anchor="middle" font-family='Liberation Sans,Arial,sans-serif' font-size="10" letter-spacing="0.2" fill="#5c5c5c">28</text>
<text x="716.5" y="529.6" text-anchor="middle" font-family='Liberation Sans,Arial,sans-serif' font-size="10" letter-spacing="0.2" fill="#5c5c5c">29</text>
<text x="740.5" y="529.6" text-anchor="middle" font-family='Liberation Sans,Arial,sans-serif' font-size="10" letter-spacing="0.2" fill="#5c5c5c">30</text>
<rect x="634" y="314.5" width="104.5" height="24.5" rx="4" fill="#fffff5"/>
<rect x="638.5" y="319.5" width="17" height="13" fill="#fff" stroke="#cfcfc4" stroke-width="1"/>
<rect x="640" y="321" width="14" height="10" fill="#ffa500"/>
<text x="666.5" y="329" font-family='Liberation Sans,Arial,sans-serif' font-size="10" letter-spacing="0.36" fill="#555">Amount Spent</text>
</svg>
<div class="t" style="left:18px;top:540.6px;font-size:10px;color:#e0162b;letter-spacing:.24px">Note. Category RENT is ignored from the graph</div>

<div id="footer"></div>
<div class="t ft" style="left:13.5px;top:569px">v1.0 @ r218 (Released: 22 Sep 2011)</div>
<!-- firefox badge -->
<div style="position:absolute;left:318px;top:568.5px;width:128.5px;height:15.5px;border:1px solid #f2b257;border-radius:3px;background:linear-gradient(#fff5e2,#ffe6b8 55%,#f9c062)"></div>
<svg style="position:absolute;left:315px;top:567px" width="18" height="18" viewBox="0 0 18 18"><circle cx="9" cy="9" r="8" fill="#e2571c"/><circle cx="9.8" cy="7.8" r="4.6" fill="#3b6fc4"/><path d="M2 10C3 15 8 17 12 15C15 13.5 16.5 10 15.5 7C15 10 12 12 9.5 11C7.5 10.2 8 8 9.5 7.5C7 6.5 5 8 4.5 10C3.5 8 4 5 6 3.5C3 4.5 1.5 7 2 10Z" fill="#f39a1e"/></svg>
<div class="t" style="left:337.5px;top:569px;font-family:'DejaVu Sans','Liberation Sans',sans-serif;font-style:italic;font-size:9px;color:#b4541a;letter-spacing:-.28px;-webkit-text-stroke:.35px #b4541a">Firefox Recommended</div>
<div class="t ft" style="left:646px;top:569px;letter-spacing:-.12px"><a href="#" style="color:#2b3f77">Error Log</a> © 2009-2011 Mihir Mone. All Rights Reserved.</div>
<!-- w3c badge -->
<div style="position:absolute;left:918.5px;top:572px;width:74px;height:11px;border:1px solid #cfcfcf;background:#fff"></div>
<div style="position:absolute;left:945px;top:574px;width:46px;height:7px;background:#ee8a30"></div>
<div class="t" style="left:922px;top:572px;font-size:7px;font-weight:bold;font-style:italic;color:#2b35c9;letter-spacing:.9px;line-height:11px;transform:scaleX(1.25);transform-origin:0 0">W3C</div>
<div class="t" style="left:946.5px;top:572px;font-size:7px;font-weight:bold;color:#4a1c00;line-height:11px;letter-spacing:.25px">XHTML 1.0<span style="color:#7b7a1c;font-size:6.5px">✓</span></div>
</body>
</html>
